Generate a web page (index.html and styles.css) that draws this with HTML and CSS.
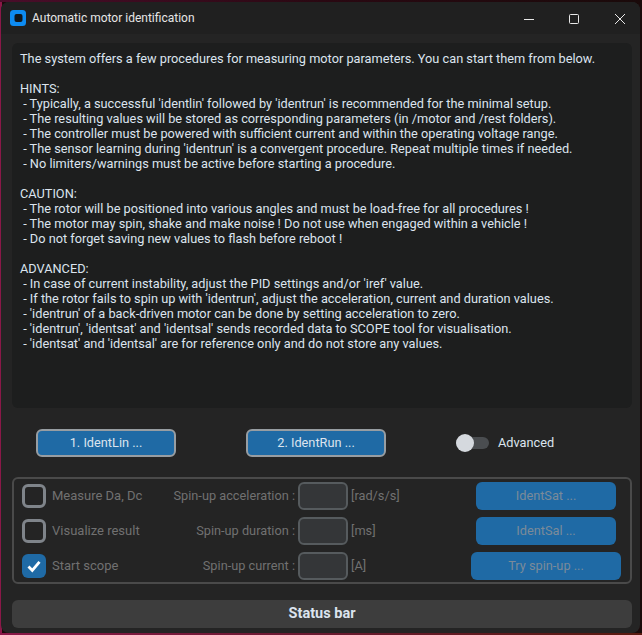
FILE: index.html
```html
<!DOCTYPE html>
<html lang="en">
<head>
<meta charset="utf-8">
<title>Automatic motor identification</title>
<link rel="stylesheet" href="styles.css">
</head>
<body>
<div class="window">
  <header class="titlebar">
    <svg class="app-icon" width="16" height="16" viewBox="0 0 16 16"><rect x="0" y="0" width="16" height="16" rx="3.5" fill="#0d8bf2"/><rect x="4.500" y="4" width="8" height="8" rx="2" fill="#10161c"/></svg>
    <span class="title">Automatic motor identification</span>
    <div class="controls">
      <svg class="ctl" width="46" height="30" viewBox="0 0 46 30"><path d="M20 17.500H30" stroke="#e8e8e8" stroke-width="1" fill="none"/></svg>
      <svg class="ctl" width="46" height="30" viewBox="0 0 46 30"><rect x="19.500" y="12.500" width="9" height="9" rx="1" stroke="#e8e8e8" stroke-width="1" fill="none"/></svg>
      <svg class="ctl" width="46" height="30" viewBox="0 0 46 30"><path d="M19 12L29 22M29 12L19 22" stroke="#e8e8e8" stroke-width="1" fill="none"/></svg>
    </div>
  </header>
  <main class="content">
    <pre class="info">The system offers a few procedures for measuring motor parameters. You can start them from below.

HINTS:
 - Typically, a successful 'identlin' followed by 'identrun' is recommended for the minimal setup.
 - The resulting values will be stored as corresponding parameters (in /motor and /rest folders).
 - The controller must be powered with sufficient current and within the operating voltage range.
 - The sensor learning during 'identrun' is a convergent procedure. Repeat multiple times if needed.
 - No limiters/warnings must be active before starting a procedure.

CAUTION:
 - The rotor will be positioned into various angles and must be load-free for all procedures !
 - The motor may spin, shake and make noise ! Do not use when engaged within a vehicle !
 - Do not forget saving new values to flash before reboot !

ADVANCED:
 - In case of current instability, adjust the PID settings and/or 'iref' value.
 - If the rotor fails to spin up with 'identrun', adjust the acceleration, current and duration values.
 - 'identrun' of a back-driven motor can be done by setting acceleration to zero.
 - 'identrun', 'identsat' and 'identsal' sends recorded data to SCOPE tool for visualisation.
 - 'identsat' and 'identsal' are for reference only and do not store any values.</pre>
    <div class="actions">
      <button class="btn primary">1. IdentLin ...</button>
      <button class="btn primary">2. IdentRun ...</button>
      <div class="switch-row">
        <span class="switch"><span class="knob"></span></span>
        <span class="switch-label">Advanced</span>
      </div>
    </div>
    <section class="panel">
      <div class="check-cell"><span class="check"></span><span class="muted">Measure Da, Dc</span></div>
      <span class="muted field-label">Spin-up acceleration :</span>
      <span class="input"></span>
      <span class="muted unit">[rad/s/s]</span>
      <button class="btn disabled">IdentSat ...</button>

      <div class="check-cell"><span class="check"></span><span class="muted">Visualize result</span></div>
      <span class="muted field-label">Spin-up duration :</span>
      <span class="input"></span>
      <span class="muted unit">[ms]</span>
      <button class="btn disabled">IdentSal ...</button>

      <div class="check-cell"><span class="check on"><svg width="24" height="24" viewBox="0 0 24 24"><path d="M6.500 12.500L10.300 16.500L17.500 7.800" stroke="#fff" stroke-width="2.800" fill="none"/></svg></span><span class="muted">Start scope</span></div>
      <span class="muted field-label">Spin-up current :</span>
      <span class="input"></span>
      <span class="muted unit">[A]</span>
      <button class="btn disabled wide">Try spin-up ...</button>
    </section>
    <footer class="status">Status bar</footer>
  </main>
</div>
</body>
</html>
```
FILE: styles.css
```css
* { box-sizing: border-box; }
html, body { margin: 0; height: 100%; }
body {
  background:
    linear-gradient(90deg, #4a0d2a, #2a0812 50%, #1a0a0a) top / 100% 2px no-repeat,
    linear-gradient(90deg, #8a1848, #6a1a30 50%, #5a1a10) bottom / 100% 2px no-repeat,
    linear-gradient(90deg, #8a1848 0 2px, #1a0a0a 2px);
  padding: 2px 2px 2px 1px;
  font-family: Roboto, "Liberation Sans", sans-serif;
  font-size: 12.75px;
  overflow: hidden;
}
.window {
  height: 631px;
  background: #242424;
  border-radius: 8px;
  display: flex;
  flex-direction: column;
  color: #dce4ee;
}
.titlebar {
  height: 32px;
  background: #202020;
  border-radius: 8px 8px 0 0;
  display: flex;
  align-items: center;
  padding-left: 9px;
  flex: none;
}
.app-icon { flex: none; }
.title { margin-left: 6px; font-size: 12px; color: #e6e6e6; }
.controls { margin-left: auto; display: flex; margin-top: -2px; margin-right: -2px; }
.ctl { display: block; }
.content {
  flex: 1;
  display: flex;
  flex-direction: column;
  padding: 9px 8px 5px 11px;
}
.info {
  margin: 0;
  height: 365px;
  background: #1d1e1e;
  border-radius: 6px;
  padding: 8px 8px;
  font: 12.75px/15px Roboto, "Liberation Sans", sans-serif;
  color: #dce4ee;
  white-space: pre-wrap;
  flex: none;
}
.actions {
  display: grid;
  grid-template-columns: 140px 140px auto;
  column-gap: 70px;
  align-items: center;
  padding: 21px 0 20px 24px;
  flex: none;
}
.btn {
  font: 12.75px Roboto, "Liberation Sans", sans-serif;
  height: 28px;
  border-radius: 6px;
  background: #1f6aa5;
  color: #dce4ee;
  border: 0;
  padding: 0 0 2px;
}
.btn.primary { border: 2px solid #979da2; padding-bottom: 2px; }
.btn.disabled { color: #7b8a99; width: 140px; justify-self: center; }
.btn.disabled.wide { width: 150px; }
.switch-row { display: flex; align-items: center; gap: 9px; }
.switch-label { margin-bottom: 2px; }
.switch { width: 33px; height: 12px; background: #4a4d50; border-radius: 6px; position: relative; display: block; }
.knob { position: absolute; left: 0; top: -3px; width: 18px; height: 18px; border-radius: 50%; background: #d5d9de; }
.panel {
  height: 107px;
  border: 2px solid #4a4a4a;
  border-radius: 6px;
  display: grid;
  grid-template-columns: 130px 146px 50px 1fr 150px;
  grid-auto-rows: 28px;
  row-gap: 7px;
  align-items: center;
  padding: 3px 9px 3px 8px;
  flex: none;
}
.muted { color: #717171; margin-bottom: 2px; }
.check-cell { display: flex; align-items: center; gap: 6px; }
.check-cell .muted { font-size: 13px; }
.check { width: 24px; height: 24px; border: 3px solid #7f848a; border-radius: 6px; display: block; flex: none; }
.check.on { border: 0; background: #1f6aa5; }
.check svg { display: block; }
.field-label { text-align: right; padding-right: 3px; white-space: nowrap; }
.input { width: 50px; height: 28px; background: #343638; border: 2px solid #565b5e; border-radius: 6px; display: block; }
.unit { padding-left: 3px; }
.status {
  margin-top: 16px;
  height: 28px;
  padding-bottom: 2px;
  background: #3d3d3d;
  border-radius: 6px;
  display: flex;
  align-items: center;
  justify-content: center;
  font-weight: 700;
  font-size: 14.500px;
  color: #dce4ee;
  flex: none;
}
```
